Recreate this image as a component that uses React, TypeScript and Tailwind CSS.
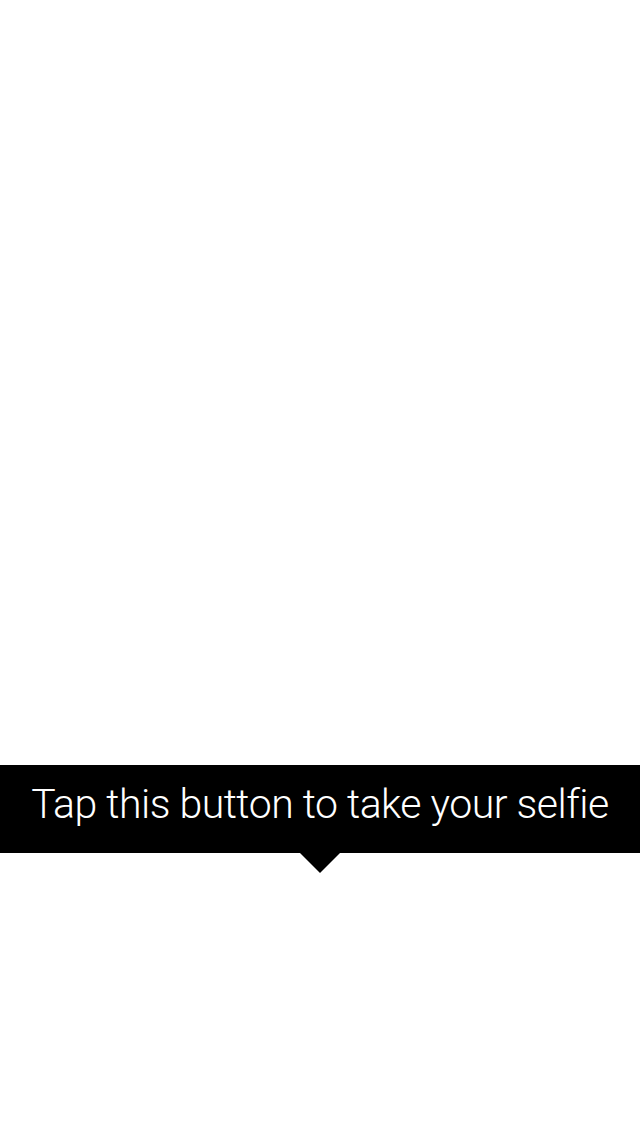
export default function App() {
  return (
    <div className="h-[1136px] w-[640px] bg-white flex flex-col">
      <div className="h-[765px]" />
      {/* Tooltip */}
      <div className="relative h-[88px] bg-black flex items-center justify-center pb-[10px]">
        <p className="text-white text-[41px] font-light leading-none tracking-[-0.5px] font-['Roboto',sans-serif]">
          Tap this button to take your selfie
        </p>
        <div className="absolute left-[300px] top-full w-0 h-0 border-l-[20px] border-r-[20px] border-t-[20px] border-l-transparent border-r-transparent border-t-black" />
      </div>
    </div>
  )
}
